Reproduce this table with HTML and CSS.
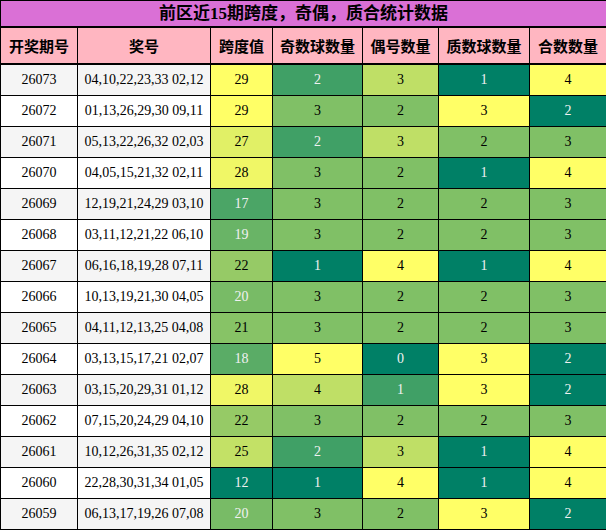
FILE: index.html
```html
<!DOCTYPE html>
<html lang="zh">
<head>
<meta charset="utf-8">
<title>前区近15期跨度，奇偶，质合统计数据</title>
<link rel="stylesheet" href="styles.css">
</head>
<body>
<table class="stats">
  <colgroup>
    <col class="w-issue"><col class="w-nums"><col class="w-span"><col class="w-odd"><col class="w-even"><col class="w-prime"><col class="w-comp">
  </colgroup>
  <thead>
    <tr class="title-row"><th colspan="7">前区近15期跨度，奇偶，质合统计数据</th></tr>
    <tr class="head-row"><th>开奖期号</th><th>奖号</th><th>跨度值</th><th>奇数球数量</th><th>偶号数量</th><th>质数球数量</th><th>合数数量</th></tr>
  </thead>
  <tbody>
    <tr><td class="base">26073</td><td class="base">04,10,22,23,33 02,12</td><td style="background:#ffff66">29</td><td class="c25">2</td><td class="c75">3</td><td class="c0">1</td><td class="c100">4</td></tr>
    <tr><td class="base">26072</td><td class="base">01,13,26,29,30 09,11</td><td style="background:#ffff66">29</td><td class="c50">3</td><td class="c50">2</td><td class="c100">3</td><td class="c0">2</td></tr>
    <tr><td class="base">26071</td><td class="base">05,13,22,26,32 02,03</td><td style="background:#e1f066">27</td><td class="c25">2</td><td class="c75">3</td><td class="c50">2</td><td class="c50">3</td></tr>
    <tr><td class="base">26070</td><td class="base">04,05,15,21,32 02,11</td><td style="background:#f0f766">28</td><td class="c50">3</td><td class="c50">2</td><td class="c0">1</td><td class="c100">4</td></tr>
    <tr><td class="base">26069</td><td class="base">12,19,21,24,29 03,10</td><td class="lt" style="background:#4ba566">17</td><td class="c50">3</td><td class="c50">2</td><td class="c50">2</td><td class="c50">3</td></tr>
    <tr><td class="base">26068</td><td class="base">03,11,12,21,22 06,10</td><td class="lt" style="background:#69b466">19</td><td class="c50">3</td><td class="c50">2</td><td class="c50">2</td><td class="c50">3</td></tr>
    <tr><td class="base">26067</td><td class="base">06,16,18,19,28 07,11</td><td style="background:#96ca66">22</td><td class="c0">1</td><td class="c100">4</td><td class="c0">1</td><td class="c100">4</td></tr>
    <tr><td class="base">26066</td><td class="base">10,13,19,21,30 04,05</td><td class="lt" style="background:#78bb66">20</td><td class="c50">3</td><td class="c50">2</td><td class="c50">2</td><td class="c50">3</td></tr>
    <tr><td class="base">26065</td><td class="base">04,11,12,13,25 04,08</td><td style="background:#87c366">21</td><td class="c50">3</td><td class="c50">2</td><td class="c50">2</td><td class="c50">3</td></tr>
    <tr><td class="base">26064</td><td class="base">03,13,15,17,21 02,07</td><td class="lt" style="background:#5aac66">18</td><td class="c100">5</td><td class="c0">0</td><td class="c100">3</td><td class="c0">2</td></tr>
    <tr><td class="base">26063</td><td class="base">03,15,20,29,31 01,12</td><td style="background:#f0f766">28</td><td class="c75">4</td><td class="c25">1</td><td class="c100">3</td><td class="c0">2</td></tr>
    <tr><td class="base">26062</td><td class="base">07,15,20,24,29 04,10</td><td style="background:#96ca66">22</td><td class="c50">3</td><td class="c50">2</td><td class="c50">2</td><td class="c50">3</td></tr>
    <tr><td class="base">26061</td><td class="base">10,12,26,31,35 02,12</td><td style="background:#c3e166">25</td><td class="c25">2</td><td class="c75">3</td><td class="c0">1</td><td class="c100">4</td></tr>
    <tr><td class="base">26060</td><td class="base">22,28,30,31,34 01,05</td><td class="lt" style="background:#008066">12</td><td class="c0">1</td><td class="c100">4</td><td class="c0">1</td><td class="c100">4</td></tr>
    <tr><td class="base">26059</td><td class="base">06,13,17,19,26 07,08</td><td class="lt" style="background:#78bb66">20</td><td class="c50">3</td><td class="c50">2</td><td class="c100">3</td><td class="c0">2</td></tr>
  </tbody>
</table>
</body>
</html>
```
FILE: styles.css
```css
html, body {
  margin: 0;
  padding: 0;
  background: #ffffff;
}

.stats {
  width: 606px;
  table-layout: fixed;
  border-collapse: collapse;
  font-family: "Liberation Serif", "Noto Sans CJK SC", serif;
  color: #000000;
}

.w-issue { width: 77px; }
.w-nums { width: 133px; }
.w-span { width: 62px; }
.w-odd { width: 90px; }
.w-even { width: 76px; }
.w-prime { width: 91px; }
.w-comp { width: 77px; }

.stats th,
.stats td {
  border: 1px solid #000000;
  padding: 0;
  text-align: center;
  white-space: nowrap;
}

.title-row th {
  height: 25px;
  background: #da70d6;
  font-size: 17px;
  font-weight: bold;
  border-bottom-width: 2px;
  line-height: 20px;
}

.head-row th {
  height: 35px;
  background: #ffb6c1;
  font-size: 15px;
  font-weight: bold;
  border-bottom-width: 2px;
}

.stats td {
  height: 30px;
  font-size: 14px;
}

.stats tbody tr:nth-child(odd) td.base { background: #f5f5f5; }
.stats tbody tr:nth-child(even) td.base { background: #ffffff; }

.c0 { background: #008066; color: #f1f1f1; }
.c25 { background: #40a066; color: #f1f1f1; }
.c50 { background: #80c066; }
.c75 { background: #bfdf66; }
.c100 { background: #ffff66; }
.lt { color: #f1f1f1; }
```
